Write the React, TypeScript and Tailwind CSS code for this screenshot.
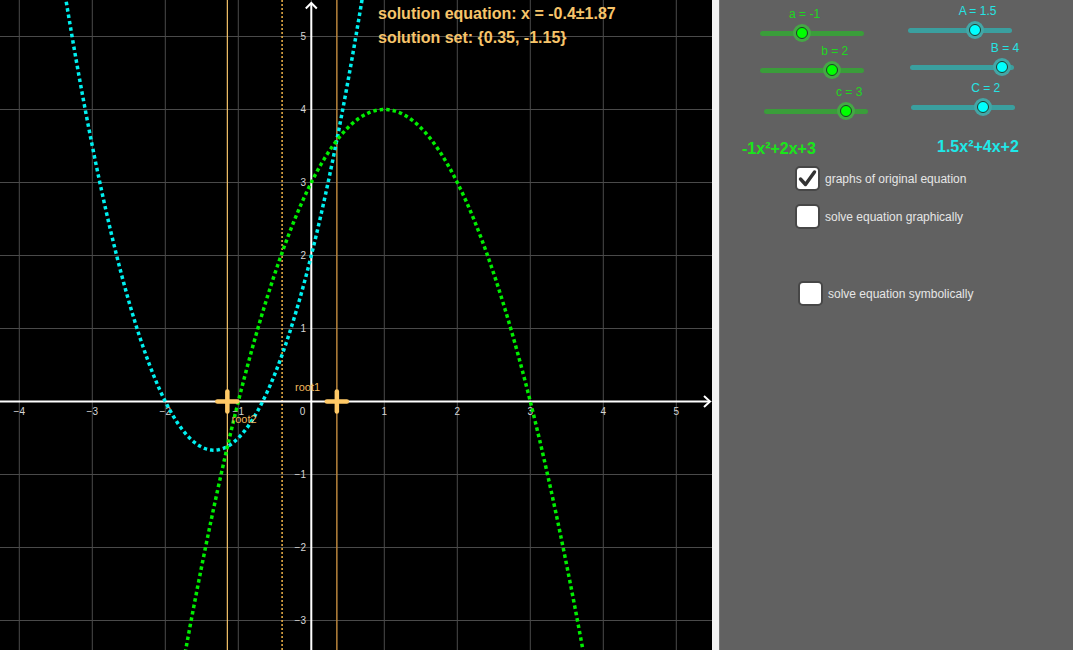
import React from 'react'

// graph coordinate system (pixels)
const OX = 311.3
const OY = 401.5
const S = 73
const px = (x: number) => OX + x * S
const py = (y: number) => OY - y * S

const W = 712
const H = 650

function curvePath(f: (x: number) => number, x0: number, x1: number) {
  const pts: string[] = []
  for (let x = x0; x <= x1 + 1e-9; x += 0.01) {
    pts.push(`${px(x).toFixed(2)},${py(f(x)).toFixed(2)}`)
  }
  return 'M' + pts.join(' L')
}

const green = (x: number) => -x * x + 2 * x + 3
const cyan = (x: number) => 1.5 * x * x + 4 * x + 2

function Graph() {
  const xTicks = [-4, -3, -2, -1, 1, 2, 3, 4, 5]
  const yTicks = [-3, -2, -1, 1, 2, 3, 4, 5]
  const gridX = [-4, -3, -2, -1, 0, 1, 2, 3, 4, 5]
  const gridY = [-3, -2, -1, 0, 1, 2, 3, 4, 5]

  return (
    <svg width={W} height={H} className="block">
      <rect width={W} height={H} fill="#000" />
      {/* grid */}
      {gridX.map((k) => (
        <line key={'gx' + k} x1={px(k)} x2={px(k)} y1={0} y2={H} stroke="#4a4a4a" strokeWidth={1} />
      ))}
      {gridY.map((k) => (
        <line key={'gy' + k} x1={0} x2={W} y1={py(k)} y2={py(k)} stroke="#4a4a4a" strokeWidth={1} />
      ))}

      {/* root lines */}
      <line x1={px(-1.15)} x2={px(-1.15)} y1={0} y2={H} stroke="#f7c46a" strokeWidth={1.2} />
      <line x1={px(0.35)} x2={px(0.35)} y1={0} y2={H} stroke="#b8843c" strokeWidth={1.5} />
      <line x1={px(-0.4)} x2={px(-0.4)} y1={0} y2={H} stroke="#f2b64a" strokeWidth={1.5} strokeDasharray="2 2" />

      {/* axes */}
      <line x1={0} x2={709} y1={OY} y2={OY} stroke="#fff" strokeWidth={2} />
      <polyline points={`704,396 710,${OY} 704,407`} fill="none" stroke="#fff" strokeWidth={2} />
      <line x1={OX} x2={OX} y1={3} y2={H} stroke="#fff" strokeWidth={2} />
      <polyline points={`305.8,8.5 ${OX},3 316.8,8.5`} fill="none" stroke="#fff" strokeWidth={2} />

      {/* tick labels */}
      {xTicks.map((k) => (
        <text key={'tx' + k} x={px(k)} y={415} fill="#d6d6d6" fontSize={10} textAnchor="middle" fontFamily="Liberation Sans, Arial, sans-serif">
          {k < 0 ? `\u2212${-k}` : k}
        </text>
      ))}
      <text x={302.5} y={415} fill="#d6d6d6" fontSize={10} textAnchor="middle" fontFamily="Liberation Sans, Arial, sans-serif">0</text>
      {yTicks.map((k) => (
        <text key={'ty' + k} x={306} y={py(k) + 3.5} fill="#d6d6d6" fontSize={10} textAnchor="end" fontFamily="Liberation Sans, Arial, sans-serif">
          {k < 0 ? `\u2212${-k}` : k}
        </text>
      ))}

      {/* curves */}
      <path d={curvePath(cyan, -3.4, 0.72)} fill="none" stroke="#00f0f0" strokeWidth={3.5} strokeDasharray="3.5 3" />
      <path d={curvePath(green, -1.76, 3.76)} fill="none" stroke="#00ee00" strokeWidth={3.5} strokeDasharray="3.5 3" />

      {/* root points */}
      {[-1.15, 0.35].map((r) => (
        <g key={r} stroke="#ffc966" strokeWidth={4.5} strokeLinecap="round">
          <line x1={px(r) - 10} x2={px(r) + 10} y1={OY} y2={OY} />
          <line x1={px(r)} x2={px(r)} y1={OY - 10} y2={OY + 10} />
        </g>
      ))}
      <text x={295} y={391} fill="#f0b85e" fontSize={11} fontFamily="Liberation Sans, Arial, sans-serif">root1</text>
      <text x={231.5} y={423} fill="#f0b85e" fontSize={11} fontFamily="Liberation Sans, Arial, sans-serif">root2</text>
    </svg>
  )
}

type Tone = 'green' | 'cyan'

function Slider({ label, pos, tone, className = '' }: { label: string; pos: number; tone: Tone; className?: string }) {
  const textCls = tone === 'green' ? 'text-[#1ed81e]' : 'text-[#26e3e3]'
  const trackCls = tone === 'green' ? 'bg-[#3a9d3a]' : 'bg-[#3a9f9f]'
  const haloCls = tone === 'green' ? 'bg-[#45a845]' : 'bg-[#43a7a7]'
  const knobCls = tone === 'green' ? 'bg-[#00ff00]' : 'bg-[#00ffff]'
  return (
    <div className={`w-[104px] ${className}`}>
      <div className="relative h-[14px]">
        <span
          className={`absolute top-0 -translate-x-1/2 whitespace-nowrap text-[12px] leading-[14px] ${textCls}`}
          style={{ left: `calc(${pos * 100}% + 3px)` }}
        >
          {label}
        </span>
      </div>
      <div className="relative mt-[7px] flex h-[10px] items-center">
        <div className={`h-[5px] w-full rounded-full ${trackCls}`} />
        <div
          className={`absolute top-1/2 flex h-[18px] w-[18px] -translate-x-1/2 -translate-y-1/2 items-center justify-center rounded-full ${haloCls}`}
          style={{ left: `${pos * 100}%` }}
        >
          <div className={`h-[12px] w-[12px] rounded-full border border-[#1f3a2a] ${knobCls}`} />
        </div>
      </div>
    </div>
  )
}

function CheckRow({ label, checked, className = '' }: { label: string; checked?: boolean; className?: string }) {
  return (
    <div className={`flex items-center gap-[5px] ${className}`}>
      <div className="flex h-[25px] w-[25px] items-center justify-center rounded-[5px] border-2 border-[#474747] bg-white">
        {checked && (
          <svg width="19" height="19" viewBox="0 0 19 19">
            <polyline points="2.5,10 7.5,15.5 16.5,3" fill="none" stroke="#333" strokeWidth={3.4} strokeLinecap="round" strokeLinejoin="round" />
          </svg>
        )}
      </div>
      <span className="text-[12px] leading-[14px] text-[#e6e6e6]">{label}</span>
    </div>
  )
}

export default function App() {
  return (
    <div className="flex h-[650px] w-[1073px] overflow-hidden font-['Liberation_Sans',Arial,sans-serif]">
      {/* graphics view */}
      <div className="relative h-[650px] w-[712px] shrink-0 bg-black">
        <Graph />
        <div className="absolute left-[378px] top-[4px] text-[16px] font-bold leading-[20px] text-[#f7c46a]">
          <div>solution equation: x = -0.4±1.87</div>
          <div className="mt-[4px]">solution set: {'{'}0.35, -1.15{'}'}</div>
        </div>
      </div>

      {/* divider */}
      <div className="h-[650px] w-[7px] shrink-0 bg-[#f4f4f4]" />
      <div className="h-[650px] w-[1px] shrink-0 bg-[#7a7a7a]" />

      {/* algebra / controls panel */}
      <div className="flex h-[650px] flex-1 flex-col bg-[#616161]">
        <div className="flex">
          <div className="ml-[40px] flex w-[108px] flex-col pt-[7px]">
            <Slider label="a = -1" pos={0.4} tone="green" />
            <Slider label="b = 2" pos={0.69} tone="green" className="mt-[6px]" />
            <Slider label="c = 3" pos={0.79} tone="green" className="ml-[4px] mt-[10px]" />
          </div>
          <div className="ml-[40px] flex w-[110px] flex-col pt-[4px]">
            <Slider label="A = 1.5" pos={0.64} tone="cyan" />
            <Slider label="B = 4" pos={0.885} tone="cyan" className="ml-[2px] mt-[6px]" />
            <Slider label="C = 2" pos={0.69} tone="cyan" className="ml-[3px] mt-[9px]" />
          </div>
        </div>

        <div className="mt-[24px] flex items-start pl-[22px] text-[16px] font-bold leading-[18px]">
          <span className="w-[195px] text-[#19e619]">-1x²+2x+3</span>
          <span className="-mt-[2px] text-[#1ee8e8]">1.5x²+4x+2</span>
        </div>

        <CheckRow label="graphs of original equation" checked className="ml-[75px] mt-[8px]" />
        <CheckRow label="solve equation graphically" className="ml-[75px] mt-[13px]" />
        <CheckRow label="solve equation symbolically" className="ml-[78px] mt-[52px]" />
      </div>
    </div>
  )
}
